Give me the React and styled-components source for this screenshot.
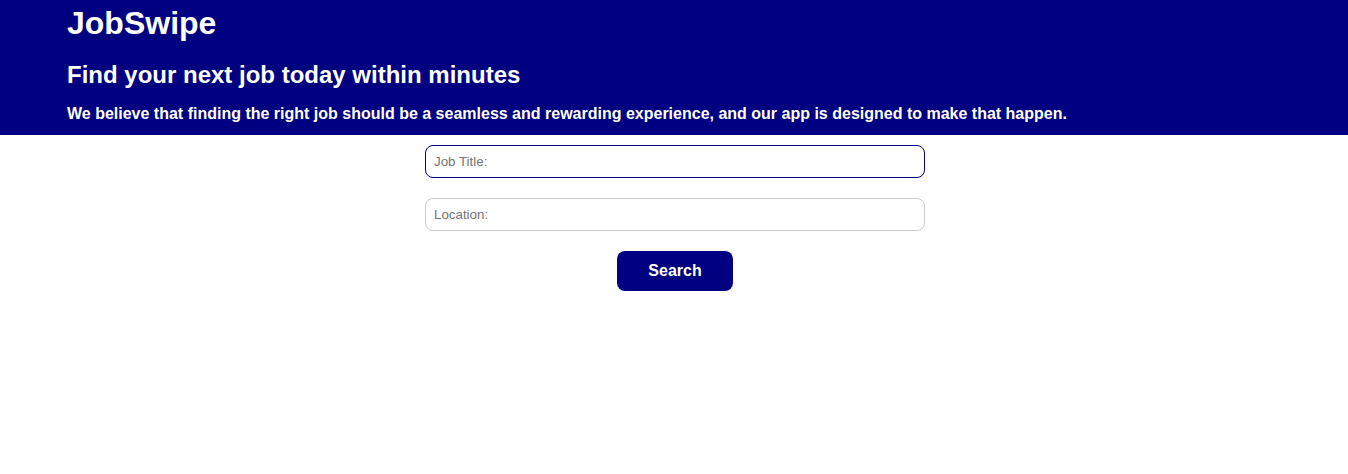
import styled, { createGlobalStyle } from "styled-components";

const GlobalStyle = createGlobalStyle`
  body {
    margin: 0;
    background: #fff;
    font-family: "Liberation Sans", Arial, sans-serif;
  }
`;

export default function App() {
  return (
    <>
      <GlobalStyle />
      <Header>
        <Brand>JobSwipe</Brand>
        <Headline>Find your next job today within minutes</Headline>
        <Tagline>
          We believe that finding the right job should be a seamless and rewarding
          experience, and our app is designed to make that happen.
        </Tagline>
      </Header>
      <SearchForm onSubmit={(e) => e.preventDefault()}>
        <Field $focused placeholder="Job Title:" />
        <Field placeholder="Location:" />
        <SearchButton type="submit">Search</SearchButton>
      </SearchForm>
    </>
  );
}

const Header = styled.header`
  background: #000080;
  color: #fff;
  padding: 5px 67px 12px;
  height: 135px;
  box-sizing: border-box;
`;

const Brand = styled.h1`
  margin: 0;
  font-size: 32px;
  font-weight: 700;
`;

const Headline = styled.h2`
  margin: 19px 0 16px;
  font-size: 24px;
  font-weight: 700;
`;

const Tagline = styled.p`
  margin: 0;
  font-size: 16px;
  font-weight: 700;
`;

const SearchForm = styled.form`
  display: flex;
  flex-direction: column;
  align-items: center;
  gap: 20px;
  padding: 10px 0 0 2px;
`;

const Field = styled.input`
  width: 500px;
  height: 33px;
  box-sizing: border-box;
  padding: 0 8px;
  border: 1px solid ${(p) => (p.$focused ? "#000080" : "#cccccc")};
  border-radius: 8px;
  font-family: "Liberation Sans", Arial, sans-serif;
  font-size: 13.33px;
  color: #333;
  outline: none;

  &::placeholder {
    color: #757575;
  }
`;

const SearchButton = styled.button`
  height: 40px;
  padding: 0 31.5px;
  border: none;
  border-radius: 8px;
  background: #000080;
  color: #fff;
  font-family: "Liberation Sans", Arial, sans-serif;
  font-size: 16px;
  font-weight: 700;
  cursor: pointer;
`;
